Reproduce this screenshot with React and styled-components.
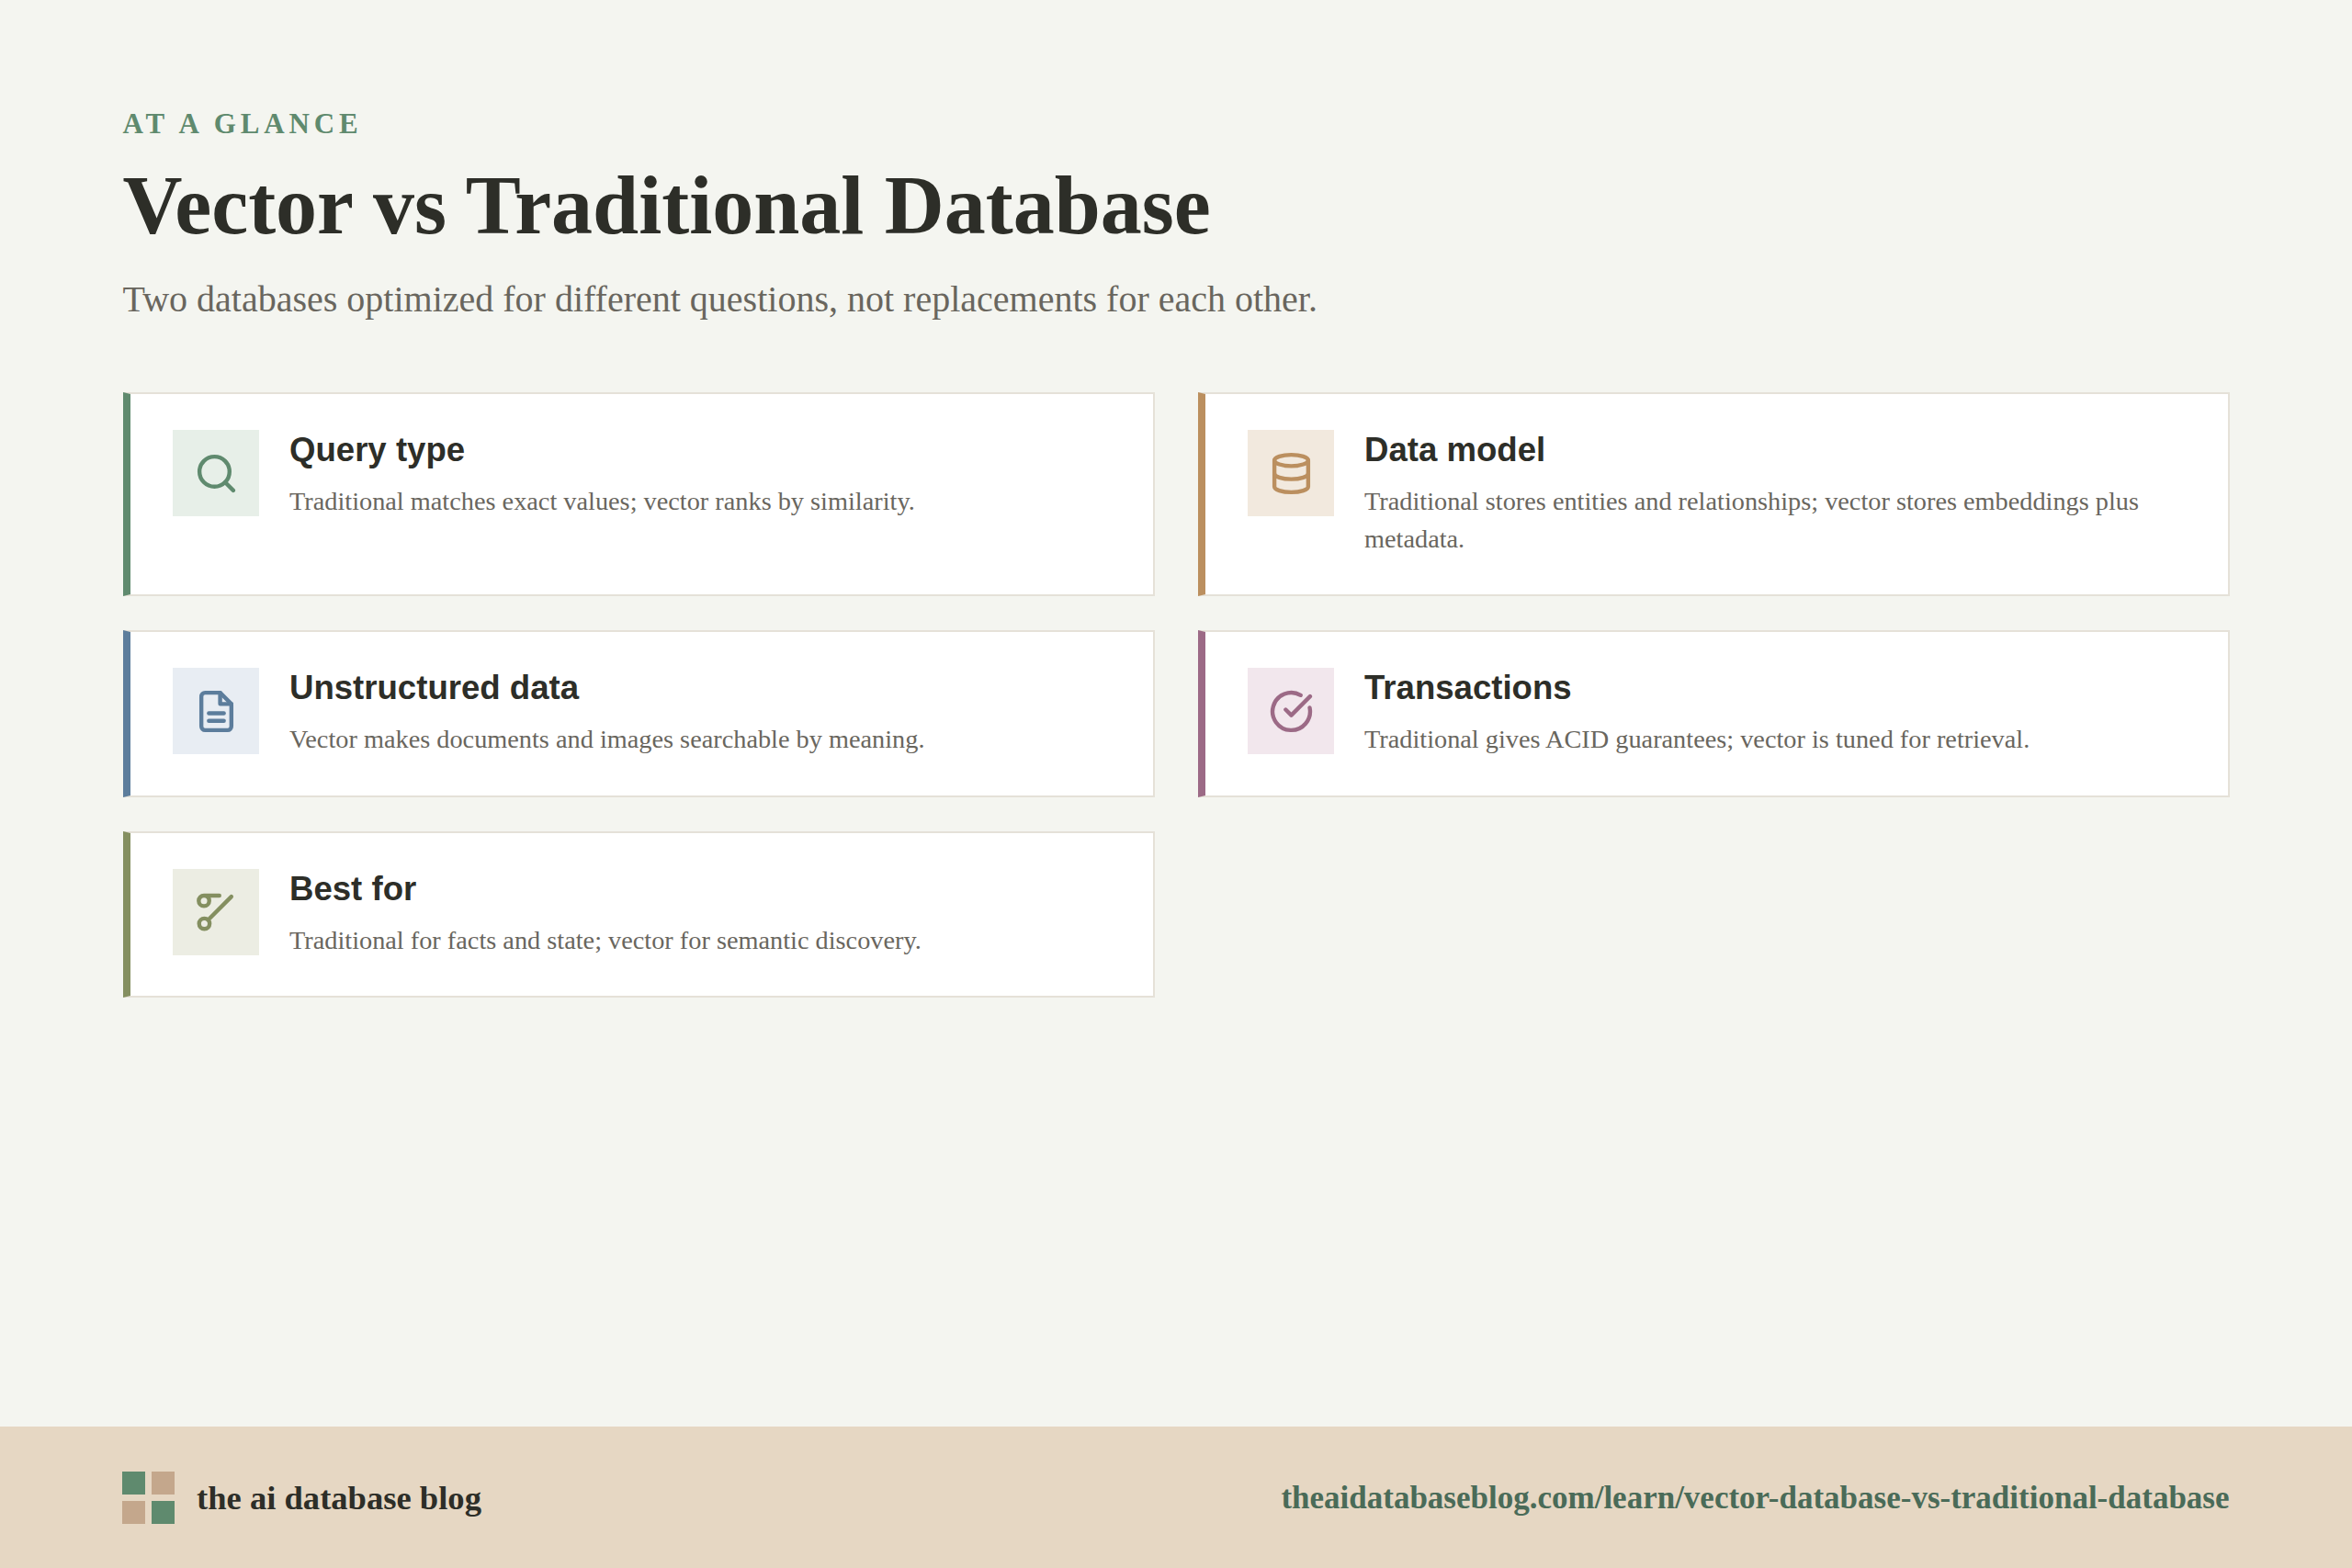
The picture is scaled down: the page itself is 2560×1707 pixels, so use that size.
import styled, { createGlobalStyle } from "styled-components"
import { Search, Database, CircleCheckBig } from "lucide-react"

const GlobalStyle = createGlobalStyle`
    html, body {
        margin: 0;
        padding: 0;
        background: #f4f5f0;
    }
`

// these two are not quite the lucide shapes, so they are drawn here
const DocIcon = () => (
    <svg width="49" height="49" viewBox="0 0 24 24" fill="none" stroke="currentColor" strokeWidth="2.15" strokeLinecap="round" strokeLinejoin="round">
        <path d="M14 2H6a2 2 0 0 0-2 2v16a2 2 0 0 0 2 2h12a2 2 0 0 0 2-2V8z" />
        <path d="M14 2v6h6" />
        <path d="M8 13h8" />
        <path d="M8 17h8" />
    </svg>
)

const RouteIcon = () => (
    <svg width="49" height="49" viewBox="0 0 24 24" fill="none" stroke="currentColor" strokeWidth="2.15" strokeLinecap="round" strokeLinejoin="round">
        <circle cx="5.6" cy="18.4" r="2.8" />
        <path d="M7.6 16.4 20 4" />
        <path d="M13.6 3.4H5.4a2.8 2.8 0 1 0 2.8 2.8c0-1.5-1.2-2.8-2.8-2.8" />
    </svg>
)

const cards = [
    { title: "Query type", text: "Traditional matches exact values; vector ranks by similarity.", accent: "#5f8a6e", tint: "#e7efe8", Icon: Search },
    { title: "Data model", text: "Traditional stores entities and relationships; vector stores embeddings plus metadata.", accent: "#bb8f5f", tint: "#f2e9de", Icon: Database },
    { title: "Unstructured data", text: "Vector makes documents and images searchable by meaning.", accent: "#5c7d9c", tint: "#e8edf3", Icon: DocIcon },
    { title: "Transactions", text: "Traditional gives ACID guarantees; vector is tuned for retrieval.", accent: "#9c6a86", tint: "#f2e7ed", Icon: CircleCheckBig },
    { title: "Best for", text: "Traditional for facts and state; vector for semantic discovery.", accent: "#848f60", tint: "#ecede3", Icon: RouteIcon },
]

const App = () => {
    return (
        <Page>
            <GlobalStyle />
            <Main>
                <Eyebrow>AT A GLANCE</Eyebrow>
                <Title>Vector vs Traditional Database</Title>
                <Subtitle>Two databases optimized for different questions, not replacements for each other.</Subtitle>
                <CardGrid>
                    {cards.map((card) => (
                        <Card key={card.title} $accent={card.accent}>
                            <IconBox $accent={card.accent} $tint={card.tint}>
                                <card.Icon size={49} strokeWidth={2.15} />
                            </IconBox>
                            <CardBody>
                                <CardTitle>{card.title}</CardTitle>
                                <CardText>{card.text}</CardText>
                            </CardBody>
                        </Card>
                    ))}
                </CardGrid>
            </Main>
            <Footer>
                <Brand>
                    <Logo>
                        <LogoCell $color="#5f8a6e" />
                        <LogoCell $color="#c4a78c" />
                        <LogoCell $color="#c4a78c" />
                        <LogoCell $color="#5f8a6e" />
                    </Logo>
                    <BrandName>the ai database blog</BrandName>
                </Brand>
                <FooterLink>theaidatabaseblog.com/learn/vector-database-vs-traditional-database</FooterLink>
            </Footer>
        </Page>
    )
}

const Page = styled.div`
    box-sizing: border-box;
    width: 2560px;
    height: 1707px;
    display: flex;
    flex-direction: column;
    background: #f4f5f0;
    font-family: "Liberation Serif", serif;
`

const Main = styled.main`
    flex: 1;
    box-sizing: border-box;
    padding: 117px 133.5px 0;
`

const Eyebrow = styled.div`
    font-weight: 700;
    font-size: 31px;
    line-height: 36px;
    letter-spacing: 4.9px;
    color: #5f8a6e;
`

const Title = styled.h1`
    margin: 19px 0 0;
    font-weight: 700;
    font-size: 90px;
    line-height: 104px;
    color: #2d2e28;
`

const Subtitle = styled.p`
    margin: 26px 0 0;
    font-weight: 400;
    font-size: 40px;
    line-height: 48px;
    color: #69665e;
`

const CardGrid = styled.div`
    display: grid;
    grid-template-columns: 1fr 1fr;
    column-gap: 47px;
    row-gap: 37px;
    align-items: stretch;
    margin-top: 77px;
`

const Card = styled.div`
    box-sizing: border-box;
    display: flex;
    gap: 33px;
    background: #ffffff;
    border: 2px solid #e5e1d8;
    border-left: 8px solid ${(props) => props.$accent};
    padding: 39px 47px 40.8px 46.5px;
`

const IconBox = styled.div`
    flex: none;
    width: 94px;
    height: 94px;
    display: flex;
    align-items: center;
    justify-content: center;
    color: ${(props) => props.$accent};
    background: ${(props) => props.$tint};
`

const CardBody = styled.div`
    flex: 1;
    min-width: 0;
`

const CardTitle = styled.div`
    font-family: "Liberation Sans", Arial, sans-serif;
    font-weight: 700;
    font-size: 36.6px;
    line-height: 43px;
    color: #2d2e28;
`

const CardText = styled.div`
    margin-top: 13.7px;
    font-size: 28.3px;
    line-height: 41px;
    color: #69665e;
`

const Footer = styled.footer`
    flex: none;
    box-sizing: border-box;
    height: 154px;
    display: flex;
    align-items: center;
    justify-content: space-between;
    padding: 0 133.5px 0 133px;
    background: #e6d7c3;
`

const Brand = styled.div`
    display: flex;
    align-items: center;
    gap: 24px;
`

const Logo = styled.div`
    display: grid;
    grid-template-columns: 25px 25px;
    grid-auto-rows: 25px;
    gap: 7px;
`

const LogoCell = styled.span`
    background: ${(props) => props.$color};
`

const BrandName = styled.span`
    font-weight: 700;
    font-size: 36.6px;
    color: #2d2e28;
`

const FooterLink = styled.span`
    padding-top: 1px;
    font-weight: 700;
    font-size: 35px;
    color: #4a6b58;
`

export default App
